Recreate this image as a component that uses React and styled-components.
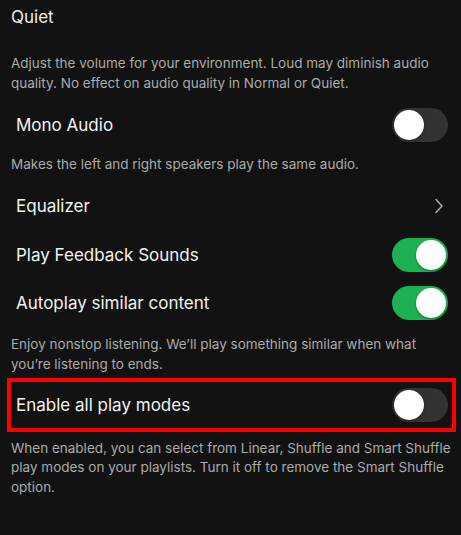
import styled, { createGlobalStyle } from "styled-components"

const GlobalStyle = createGlobalStyle`
    html, body {
        margin: 0;
        background: #121212;
    }
    body {
        font-family: Inter, "Noto Sans", sans-serif;
        -webkit-font-smoothing: antialiased;
    }
`

const Toggle = ({ on }) => (
    <Track $on={on}>
        <Knob $on={on} />
    </Track>
)

const App = () => {
    return (
        <Page>
            <GlobalStyle />
            <Title>Quiet</Title>
            <Note $top={21}>
                Adjust the volume for your environment. Loud may diminish audio
                quality. No effect on audio quality in Normal or Quiet.
            </Note>
            <Row $top={8}>
                <Label>Mono Audio</Label>
                <Toggle on={false} />
            </Row>
            <Note $top={6}>Makes the left and right speakers play the same audio.</Note>
            <Row $top={7}>
                <Label>Equalizer</Label>
                <Chevron width="10" height="16" viewBox="0 0 10 16">
                    <polyline points="2,1.5 8,8 2,14.5" />
                </Chevron>
            </Row>
            <Row $top={1}>
                <Label>Play Feedback Sounds</Label>
                <Toggle on />
            </Row>
            <Row>
                <Label>Autoplay similar content</Label>
                <Toggle on />
            </Row>
            <Note $top={8}>
                Enjoy nonstop listening. We’ll play something similar when what
                you’re listening to ends.
            </Note>
            <Highlight>
                <Row>
                    <Label>Enable all play modes</Label>
                    <Toggle on={false} />
                </Row>
            </Highlight>
            <Note $top={7}>
                When enabled, you can select from Linear, Shuffle and Smart Shuffle
                play modes on your playlists. Turn it off to remove the Smart Shuffle
                option.
            </Note>
        </Page>
    )
}

export default App

const Page = styled.div`
    width: 461px;
    height: 535px;
    box-sizing: border-box;
    padding-top: 1px;
    overflow: hidden;
    background: #121212;
    display: flex;
    flex-direction: column;
`

const Title = styled.div`
    height: 32px;
    line-height: 32px;
    padding-left: 11px;
    font-size: 17px;
    color: #ececec;
`

const Note = styled.p`
    margin: ${p => p.$top || 0}px 0 0;
    padding: 0 8px 0 11px;
    font-size: 13.5px;
    line-height: 19.7px;
    color: #ababab;
`

const Row = styled.div`
    height: 48px;
    margin-top: ${p => p.$top || 0}px;
    padding: 0 13px 0 16px;
    display: flex;
    align-items: center;
    justify-content: space-between;
`

const Label = styled.span`
    font-size: 17px;
    color: #f2f2f2;
`

const Track = styled.div`
    width: 56px;
    height: 34px;
    border-radius: 17px;
    box-sizing: border-box;
    padding: 2px;
    background: ${p => (p.$on ? "#1eb153" : "#323234")};
    display: flex;
    justify-content: ${p => (p.$on ? "flex-end" : "flex-start")};
`

const Knob = styled.div`
    width: 30px;
    height: 30px;
    border-radius: 50%;
    background: #ffffff;
    box-shadow: 0 1px 3px rgba(0, 0, 0, 0.35);
`

const Chevron = styled.svg`
    margin-right: 4px;
    fill: none;
    stroke: #a8a8a8;
    stroke-width: 1.6;
    stroke-linecap: round;
    stroke-linejoin: round;
`

const Highlight = styled.div`
    margin: 3px 5px 0 7px;
    border: 4px solid #ff0000;
    & > ${Row} {
        height: 46px;
        padding: 0 4px 0 5px;
    }
`
